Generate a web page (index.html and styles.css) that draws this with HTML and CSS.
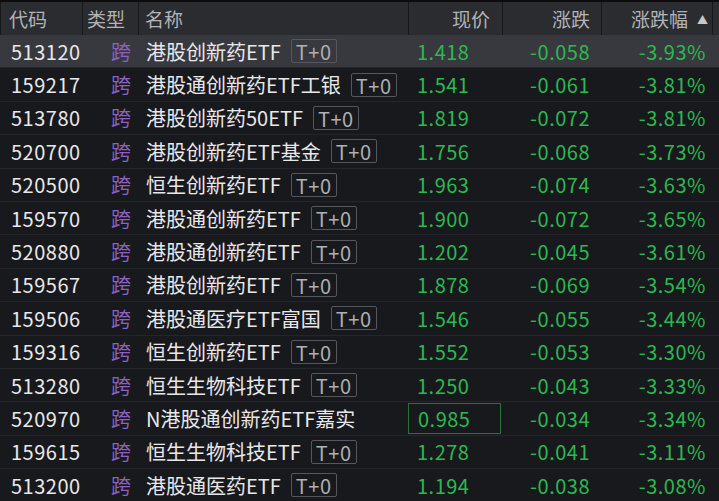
FILE: index.html
```html
<!DOCTYPE html>
<html lang="zh-CN">

<head>
    <meta charset="UTF-8">
    <meta name="viewport" content="width=device-width, initial-scale=1.0">
    <title>ETF 行情</title>
    <link rel="stylesheet" href="styles.css">
</head>

<body>

    <div class="quote-table">
        <div class="row head">
            <div class="cell code">代码</div>
            <div class="cell type">类型</div>
            <div class="cell name">名称</div>
            <div class="cell price">现价</div>
            <div class="cell chg">涨跌</div>
            <div class="cell pct">涨跌幅 <span class="sort">▲</span></div>
        </div>

        <div class="row active">
            <div class="cell code">513120</div>
            <div class="cell type">跨</div>
            <div class="cell name">港股创新药ETF <span class="tag">T+0</span></div>
            <div class="cell price">1.418</div>
            <div class="cell chg">-0.058</div>
            <div class="cell pct">-3.93%</div>
        </div>
        <div class="row">
            <div class="cell code">159217</div>
            <div class="cell type">跨</div>
            <div class="cell name">港股通创新药ETF工银 <span class="tag">T+0</span></div>
            <div class="cell price">1.541</div>
            <div class="cell chg">-0.061</div>
            <div class="cell pct">-3.81%</div>
        </div>
        <div class="row">
            <div class="cell code">513780</div>
            <div class="cell type">跨</div>
            <div class="cell name">港股创新药50ETF <span class="tag">T+0</span></div>
            <div class="cell price">1.819</div>
            <div class="cell chg">-0.072</div>
            <div class="cell pct">-3.81%</div>
        </div>
        <div class="row">
            <div class="cell code">520700</div>
            <div class="cell type">跨</div>
            <div class="cell name">港股创新药ETF基金 <span class="tag">T+0</span></div>
            <div class="cell price">1.756</div>
            <div class="cell chg">-0.068</div>
            <div class="cell pct">-3.73%</div>
        </div>
        <div class="row">
            <div class="cell code">520500</div>
            <div class="cell type">跨</div>
            <div class="cell name">恒生创新药ETF <span class="tag">T+0</span></div>
            <div class="cell price">1.963</div>
            <div class="cell chg">-0.074</div>
            <div class="cell pct">-3.63%</div>
        </div>
        <div class="row">
            <div class="cell code">159570</div>
            <div class="cell type">跨</div>
            <div class="cell name">港股通创新药ETF <span class="tag">T+0</span></div>
            <div class="cell price">1.900</div>
            <div class="cell chg">-0.072</div>
            <div class="cell pct">-3.65%</div>
        </div>
        <div class="row">
            <div class="cell code">520880</div>
            <div class="cell type">跨</div>
            <div class="cell name">港股通创新药ETF <span class="tag">T+0</span></div>
            <div class="cell price">1.202</div>
            <div class="cell chg">-0.045</div>
            <div class="cell pct">-3.61%</div>
        </div>
        <div class="row">
            <div class="cell code">159567</div>
            <div class="cell type">跨</div>
            <div class="cell name">港股创新药ETF <span class="tag">T+0</span></div>
            <div class="cell price">1.878</div>
            <div class="cell chg">-0.069</div>
            <div class="cell pct">-3.54%</div>
        </div>
        <div class="row">
            <div class="cell code">159506</div>
            <div class="cell type">跨</div>
            <div class="cell name">港股通医疗ETF富国 <span class="tag">T+0</span></div>
            <div class="cell price">1.546</div>
            <div class="cell chg">-0.055</div>
            <div class="cell pct">-3.44%</div>
        </div>
        <div class="row">
            <div class="cell code">159316</div>
            <div class="cell type">跨</div>
            <div class="cell name">恒生创新药ETF <span class="tag">T+0</span></div>
            <div class="cell price">1.552</div>
            <div class="cell chg">-0.053</div>
            <div class="cell pct">-3.30%</div>
        </div>
        <div class="row">
            <div class="cell code">513280</div>
            <div class="cell type">跨</div>
            <div class="cell name">恒生生物科技ETF <span class="tag">T+0</span></div>
            <div class="cell price">1.250</div>
            <div class="cell chg">-0.043</div>
            <div class="cell pct">-3.33%</div>
        </div>
        <div class="row">
            <div class="cell code">520970</div>
            <div class="cell type">跨</div>
            <div class="cell name">N港股通创新药ETF嘉实</div>
            <div class="cell price boxed">0.985</div>
            <div class="cell chg">-0.034</div>
            <div class="cell pct">-3.34%</div>
        </div>
        <div class="row">
            <div class="cell code">159615</div>
            <div class="cell type">跨</div>
            <div class="cell name">恒生生物科技ETF <span class="tag">T+0</span></div>
            <div class="cell price">1.278</div>
            <div class="cell chg">-0.041</div>
            <div class="cell pct">-3.11%</div>
        </div>
        <div class="row">
            <div class="cell code">513200</div>
            <div class="cell type">跨</div>
            <div class="cell name">港股通医药ETF <span class="tag">T+0</span></div>
            <div class="cell price">1.194</div>
            <div class="cell chg">-0.038</div>
            <div class="cell pct">-3.08%</div>
        </div>
    </div>

</body>

</html>
```

FILE: styles.css
```css
body {
    margin: 0;
    padding: 0;
    background-color: #18191d;
    font-family: "Noto Sans CJK SC", "Noto Sans", sans-serif;
    overflow: hidden;
}

.quote-table {
    width: 719px;
    height: 501px;
    border-top: 2px solid #0c0c0e;
    box-sizing: border-box;
}

.row {
    display: grid;
    grid-template-columns: 82px 56px 270px 94px 99px 112px 6px;
    height: 33.4px;
    border-bottom: 1px solid #24262b;
    box-sizing: border-box;
    font-size: 20px;
    color: #e8e8ea;
    background-color: #18191d;
}

.cell {
    display: flex;
    align-items: center;
    white-space: nowrap;
    overflow: hidden;
    box-sizing: border-box;
}

/* header */
.row.head {
    height: 33px;
    font-size: 19px;
    background-color: #2a2c30;
    border-bottom: none;
}

.row.head .cell {
    color: #b2b3b6;
    letter-spacing: 0;
    border-left: 1px solid #17181b;
}

.row.head .cell.code {
    padding-left: 8px;
}

.row.head .cell.type {
    padding-left: 4px;
    justify-content: flex-start;
}

.row.head .cell.name {
    padding-left: 6px;
}

.row.head .cell.price {
    justify-content: flex-end;
    padding-left: 0;
    padding-right: 12px;
}

.row.head .cell.pct {
    padding-right: 4px;
    border-right: 1px solid #17181b;
}

.sort {
    font-size: 11px;
    margin-left: 9px;
    color: #c8c8ca;
}

.row.active {
    background-color: #38393e;
}

/* body cells */
.code {
    padding-left: 11px;
    letter-spacing: 0.5px;
}

.type {
    padding-left: 29px;
    color: #8b62c4;
}

.name {
    padding-left: 8px;
}

.tag {
    display: inline-block;
    margin-left: 10px;
    padding: 0 4px;
    height: 24px;
    line-height: 23px;
    border: 1px solid #55575c;
    border-radius: 2px;
    color: #aeafb2;
    letter-spacing: 0.5px;
    box-sizing: border-box;
}

.price,
.chg,
.pct {
    color: #2cb850;
    letter-spacing: 0.5px;
}

.price {
    padding-left: 9px;
}

.chg {
    justify-content: flex-end;
    padding-right: 11px;
}

.pct {
    justify-content: flex-end;
    padding-right: 7px;
}

.boxed {
    border: 1px solid #2a7039;
    margin: 1px 1px 1px 0;
}
```
